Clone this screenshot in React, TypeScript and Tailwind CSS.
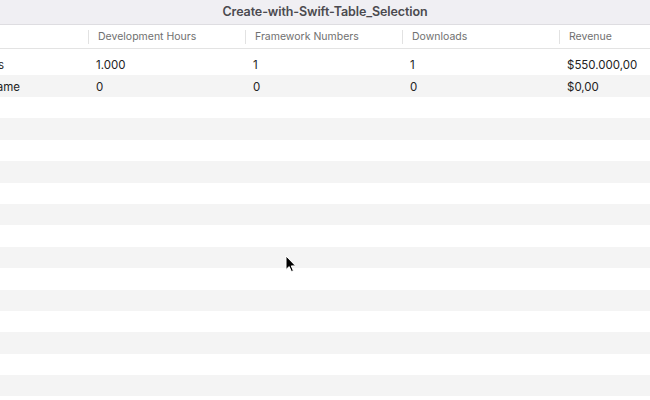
const columns = ["Development Hours", "Framework Numbers", "Downloads", "Revenue"];

const rows = [
  { name: "Apps", end: "pr-[84px]", values: ["1.000", "1", "1", "$550.000,00"] },
  { name: "Game", end: "pr-[68px]", values: ["0", "0", "0", "$0,00"] },
];

function Cursor() {
  return (
    <svg className="absolute left-[285px] top-[255px]" width="12" height="18" viewBox="0 0 12 18">
      <path d="M1 1 L1 14.5 L4.2 11.6 L6.4 16.6 L8.4 15.7 L6.3 10.9 L10.6 10.9 Z" fill="#000" stroke="#fff" strokeWidth="1" strokeLinejoin="round" />
    </svg>
  );
}

export default function App() {
  const empty = Array.from({ length: 14 }, (_, i) => i);

  return (
    <div className="relative w-[650px] h-[400px] overflow-hidden bg-white font-['Inter','Liberation_Sans',sans-serif]">
      {/* title bar */}
      <div className="h-[25px] flex items-center justify-center bg-[#f0eff3] border-b border-[#dedde1]">
        <span className="text-[12.5px] font-semibold text-[#4b4a4f] tracking-[-0.1px]">Create-with-Swift-Table_Selection</span>
      </div>

      {/* header */}
      <div className="h-[24px] flex items-center border-b border-[#e3e3e3] text-[10.5px] text-[#707070]">
        <div className="w-[88px] shrink-0" />
        {columns.map((c) => (
          <div key={c} className="w-[157px] shrink-0 flex items-center">
            <div className="w-px h-[14px] bg-[#e2e2e2]" />
            <span className="pl-[9px] whitespace-nowrap">{c}</span>
          </div>
        ))}
      </div>

      <div className="h-[4px]" />

      {/* rows */}
      <div className="text-[11.5px] text-[#232323]">
        {rows.map((r, i) => (
          <div key={r.name} className={`h-[22px] flex items-center pt-[4px] ${i % 2 === 1 ? "bg-[#f4f4f4]" : ""}`}>
            <div className={`w-[88px] shrink-0 flex justify-end whitespace-nowrap ${r.end}`}>{r.name}</div>
            {r.values.map((v, j) => (
              <div key={j} className="w-[157px] shrink-0 pl-[8px] whitespace-nowrap">{v}</div>
            ))}
          </div>
        ))}
        {empty.map((i) => (
          <div key={i} className={`h-[21.4px] ${i % 2 === 1 ? "bg-[#f4f4f4]" : ""}`} />
        ))}
      </div>

      <Cursor />
    </div>
  );
}
